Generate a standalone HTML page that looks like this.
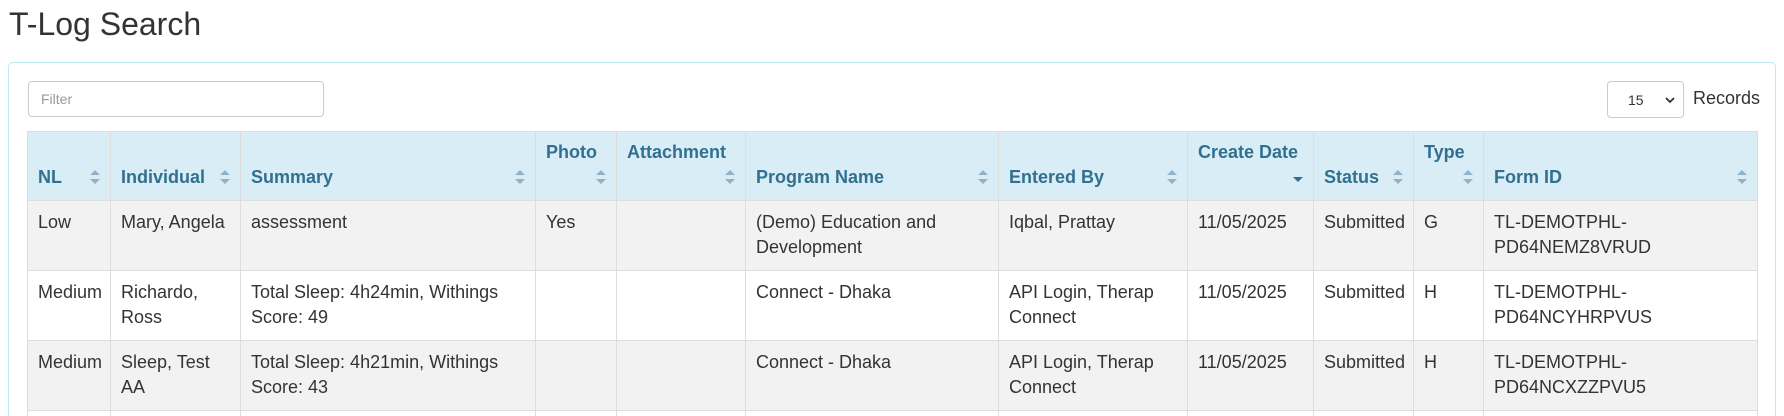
<!DOCTYPE html>
<html><head><meta charset="utf-8"><style>
html,body{margin:0;padding:0;width:1784px;height:416px;overflow:hidden;background:#fff;font-family:"Liberation Sans",Arial,sans-serif;color:#333}
#wrap{position:relative;width:1784px;height:416px;overflow:hidden}
h1{position:absolute;left:9px;top:2px;margin:0;font-size:32px;font-weight:normal;line-height:44px;color:#333}
.panel{position:absolute;left:8px;top:62px;width:1766px;height:440px;border:1px solid #bce8f1;border-radius:5px}
.filter{position:absolute;left:19px;top:18px;width:296px;height:36px;border:1px solid #ccc;border-radius:4px;box-sizing:border-box;font-size:14px;color:#999;padding:9px 12px}
.sel{position:absolute;left:1598px;top:18px;width:77px;height:37px;border:1px solid #ccc;border-radius:4px;box-sizing:border-box;font-size:14px;color:#333;padding:10px 0 0 20px}
.sel svg{position:absolute;right:8px;top:15px}
.rec{position:absolute;left:1684px;top:25px;font-size:18px}
table{position:absolute;left:18px;top:68px;border-collapse:collapse;table-layout:fixed;width:1730px;font-size:18px}
th,td{border:1px solid #ddd;line-height:25px;text-align:left;overflow:hidden}
th{background:#d9edf7;color:#31708f;font-weight:bold;vertical-align:bottom;padding:8px 10px 10px}
td{vertical-align:top;padding:9px 10px 10px}
tr.s td{background:#f2f2f2}
.ic{float:right;margin-top:4px}
.r{text-align:right;height:25px}
.r .ic{float:none;display:inline-block}
</style></head><body><div id="wrap">
<h1>T-Log Search</h1>
<div class="panel">
<div class="filter">Filter</div>
<div class="sel">15<svg width="10" height="7" viewBox="0 0 10 7"><path d="M1 1l4 4 4-4" fill="none" stroke="#333" stroke-width="1.8"/></svg></div>
<div class="rec">Records</div>
<table>
<colgroup><col style="width:83px"><col style="width:130px"><col style="width:295px"><col style="width:81px"><col style="width:129px"><col style="width:253px"><col style="width:189px"><col style="width:126px"><col style="width:100px"><col style="width:70px"><col style="width:274px"></colgroup>
<tr>
<th>NL<svg class="ic" width="10" height="16" viewBox="0 0 10 16"><path d="M0 6L5 1 10 6ZM0 10L5 15 10 10Z" fill="#8fb3c9"/></svg></th>
<th>Individual<svg class="ic" width="10" height="16" viewBox="0 0 10 16"><path d="M0 6L5 1 10 6ZM0 10L5 15 10 10Z" fill="#8fb3c9"/></svg></th>
<th>Summary<svg class="ic" width="10" height="16" viewBox="0 0 10 16"><path d="M0 6L5 1 10 6ZM0 10L5 15 10 10Z" fill="#8fb3c9"/></svg></th>
<th><div>Photo</div><div class="r"><svg class="ic" width="10" height="16" viewBox="0 0 10 16"><path d="M0 6L5 1 10 6ZM0 10L5 15 10 10Z" fill="#8fb3c9"/></svg></div></th>
<th><div>Attachment</div><div class="r"><svg class="ic" width="10" height="16" viewBox="0 0 10 16"><path d="M0 6L5 1 10 6ZM0 10L5 15 10 10Z" fill="#8fb3c9"/></svg></div></th>
<th>Program Name<svg class="ic" width="10" height="16" viewBox="0 0 10 16"><path d="M0 6L5 1 10 6ZM0 10L5 15 10 10Z" fill="#8fb3c9"/></svg></th>
<th>Entered By<svg class="ic" width="10" height="16" viewBox="0 0 10 16"><path d="M0 6L5 1 10 6ZM0 10L5 15 10 10Z" fill="#8fb3c9"/></svg></th>
<th><div>Create Date</div><div class="r"><svg class="ic" width="10" height="16" viewBox="0 0 10 16"><path d="M0 8L5 13 10 8Z" fill="#31708f"/></svg></div></th>
<th>Status<svg class="ic" width="10" height="16" viewBox="0 0 10 16"><path d="M0 6L5 1 10 6ZM0 10L5 15 10 10Z" fill="#8fb3c9"/></svg></th>
<th><div>Type</div><div class="r"><svg class="ic" width="10" height="16" viewBox="0 0 10 16"><path d="M0 6L5 1 10 6ZM0 10L5 15 10 10Z" fill="#8fb3c9"/></svg></div></th>
<th>Form ID<svg class="ic" width="10" height="16" viewBox="0 0 10 16"><path d="M0 6L5 1 10 6ZM0 10L5 15 10 10Z" fill="#8fb3c9"/></svg></th>
</tr>
<tr class="s"><td>Low</td><td>Mary, Angela</td><td>assessment</td><td>Yes</td><td></td><td>(Demo) Education and Development</td><td>Iqbal, Prattay</td><td>11/05/2025</td><td>Submitted</td><td>G</td><td>TL-DEMOTPHL-<br>PD64NEMZ8VRUD</td></tr>
<tr><td>Medium</td><td>Richardo, Ross</td><td>Total Sleep: 4h24min, Withings Score: 49</td><td></td><td></td><td>Connect - Dhaka</td><td>API Login, Therap Connect</td><td>11/05/2025</td><td>Submitted</td><td>H</td><td>TL-DEMOTPHL-<br>PD64NCYHRPVUS</td></tr>
<tr class="s"><td>Medium</td><td>Sleep, Test AA</td><td>Total Sleep: 4h21min, Withings Score: 43</td><td></td><td></td><td>Connect - Dhaka</td><td>API Login, Therap Connect</td><td>11/05/2025</td><td>Submitted</td><td>H</td><td>TL-DEMOTPHL-<br>PD64NCXZZPVU5</td></tr>
<tr><td>&nbsp;<br>&nbsp;</td><td></td><td></td><td></td><td></td><td></td><td></td><td></td><td></td><td></td><td></td></tr>
</table>
</div>
</div></body></html>
